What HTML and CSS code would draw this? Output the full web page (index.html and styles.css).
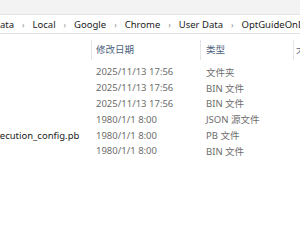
FILE: index.html
```html
<!DOCTYPE html>
<html lang="zh">
<head>
    <meta charset="UTF-8" />
    <title>OptGuideOnDeviceModel</title>
    <link rel="stylesheet" href="styles.css">
</head>
<body>
    <div class="toolbar"></div>

    <div class="address">
        <span class="crumb first">Data</span>
        <span class="sep">›</span>
        <span class="crumb">Local</span>
        <span class="sep">›</span>
        <span class="crumb">Google</span>
        <span class="sep">›</span>
        <span class="crumb">Chrome</span>
        <span class="sep">›</span>
        <span class="crumb">User Data</span>
        <span class="sep">›</span>
        <span class="crumb">OptGuideOnDeviceModel</span>
    </div>

    <div class="list">
        <div class="head">
            <div class="col name"></div>
            <div class="col date">修改日期</div>
            <div class="col type">类型</div>
            <div class="col size">大小</div>
        </div>

        <div class="row">
            <div class="col name"></div>
            <div class="col date">2025/11/13 17:56</div>
            <div class="col type">文件夹</div>
        </div>
        <div class="row">
            <div class="col name"></div>
            <div class="col date">2025/11/13 17:56</div>
            <div class="col type">BIN 文件</div>
        </div>
        <div class="row">
            <div class="col name"></div>
            <div class="col date">2025/11/13 17:56</div>
            <div class="col type">BIN 文件</div>
        </div>
        <div class="row">
            <div class="col name"></div>
            <div class="col date">1980/1/1 8:00</div>
            <div class="col type">JSON 源文件</div>
        </div>
        <div class="row">
            <div class="col name"><span class="file">xecution_config.pb</span></div>
            <div class="col date">1980/1/1 8:00</div>
            <div class="col type">PB 文件</div>
        </div>
        <div class="row">
            <div class="col name"></div>
            <div class="col date">1980/1/1 8:00</div>
            <div class="col type">BIN 文件</div>
        </div>
    </div>
</body>
</html>
```

FILE: styles.css
```css
html, body {
    margin: 0;
    padding: 0;
    background: #ffffff;
    overflow: hidden;
}
body {
    width: 300px;
    height: 250px;
    font-family: 'Segoe UI', 'Noto Sans', 'Noto Sans CJK SC', sans-serif;
    font-size: 9.5px;
    color: #1b1b1b;
}
.toolbar {
    height: 14px;
    background: #f3f3f3;
}
.address {
    height: 18px;
    border-top: 1px solid #e3e3e3;
    border-bottom: 1px solid #e3e3e3;
    display: flex;
    align-items: center;
    white-space: nowrap;
    overflow: hidden;
}
.crumb {
    font-size: 9.5px;
    color: #1b1b1b;
}
.crumb.first {
    margin-left: -7px;
}
.sep {
    color: #8a8a8a;
    font-size: 8px;
    margin: 0 8px;
}
.list {
    padding-top: 6px;
}
.head,
.row {
    display: flex;
    white-space: nowrap;
}
.head {
    height: 20px;
    align-items: center;
    color: #4c607a;
    margin-bottom: 4px;
}
.row {
    height: 15.8px;
    align-items: center;
    color: #6d6d6d;
}
.col {
    flex: none;
    box-sizing: border-box;
    overflow: hidden;
}
.name {
    width: 91px;
    overflow: visible;
}
.date {
    width: 109px;
    padding-left: 5px;
}
.type {
    width: 93px;
    padding-left: 6px;
}
.size {
    width: 40px;
    padding-left: 3px;
}
.head .date,
.head .type,
.head .size {
    border-left: 1px solid #e5e5e5;
    height: 20px;
    line-height: 20px;
}
.head .date {
    padding-left: 4px;
}
.head .type {
    padding-left: 5px;
}
.head .size {
    padding-left: 2px;
}
.file {
    display: inline-block;
    margin-left: -5px;
    color: #1b1b1b;
}
```
